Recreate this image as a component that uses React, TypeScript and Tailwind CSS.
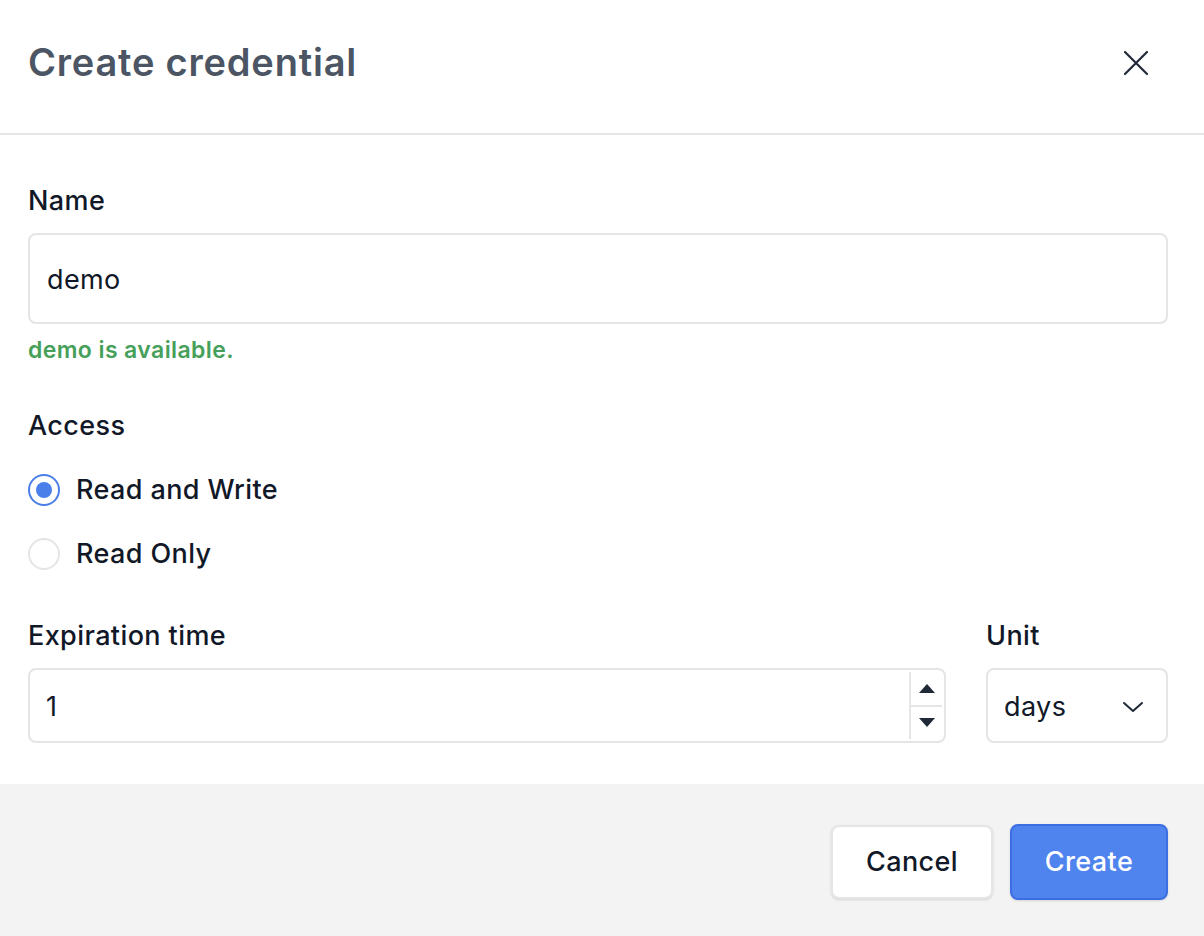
import { useState } from 'react';

const UNITS = ['days', 'hours', 'minutes'];

export default function App() {
  const [name, setName] = useState('demo');
  const [access, setAccess] = useState<'rw' | 'ro'>('rw');
  const [amount, setAmount] = useState(1);
  const [unit, setUnit] = useState(UNITS[0]);

  return (
    <div
      className="flex h-[936px] w-[1204px] flex-col bg-white text-[#111827]"
      style={{ fontFamily: 'Inter, "Noto Sans", sans-serif' }}
    >
      {/* ── Header ───────────────────────────────────────────── */}
      <div className="flex h-[135px] shrink-0 items-center justify-between border-b-2 border-[#e5e5e5] pb-[8px] pl-[28px] pr-[55px]">
        <h1 className="text-[38px] font-semibold tracking-[0.8px] text-[#4b5563]">Create credential</h1>
        <button type="button" aria-label="Close" className="text-[#1f2937]">
          <svg width="26" height="26" viewBox="0 0 26 26" fill="none" stroke="currentColor" strokeWidth="2.2" strokeLinecap="round">
            <path d="M2 2L24 24M24 2L2 24" />
          </svg>
        </button>
      </div>

      {/* ── Body ─────────────────────────────────────────────── */}
      <div className="flex flex-1 flex-col pl-[28px] pr-[36px] pt-[50px] text-[27px] tracking-[0.4px]">
        <label className="font-medium leading-[32px]">Name</label>
        <input
          value={name}
          onChange={(e) => setName(e.target.value)}
          className="mt-[16px] h-[91px] w-full rounded-[8px] border-2 border-[#e5e5e5] px-[17px] pt-[2px] outline-none"
        />
        <p className="mt-[12px] text-[23px] font-semibold leading-[28px] tracking-[0.4px] text-[#46a05a]">{name} is available.</p>

        <label className="mt-[46px] font-medium leading-[32px]">Access</label>
        <div className="mt-[32px] flex flex-col gap-[32px]">
          {([
            ['rw', 'Read and Write'],
            ['ro', 'Read Only'],
          ] as const).map(([id, text]) => {
            const on = access === id;
            return (
              <button key={id} type="button" onClick={() => setAccess(id)} className="flex h-[32px] items-center gap-[16px]">
                <span
                  className={
                    on
                      ? 'flex h-[32px] w-[32px] items-center justify-center rounded-full border-2 border-[#4a7fea]'
                      : 'flex h-[32px] w-[32px] items-center justify-center rounded-full border-2 border-[#e5e5e5]'
                  }
                >
                  {on && <span className="h-[16px] w-[16px] rounded-full bg-[#4a7fea]" />}
                </span>
                <span className="font-medium">{text}</span>
              </button>
            );
          })}
        </div>

        <div className="mt-[50px] flex gap-[40px]">
          <div className="flex flex-1 flex-col">
            <label className="font-medium leading-[32px]">Expiration time</label>
            <div className="mt-[16px] flex h-[75px] items-stretch rounded-[8px] border-2 border-[#e5e5e5]">
              <input
                value={amount}
                onChange={(e) => setAmount(Number(e.target.value) || 0)}
                className="min-w-0 flex-1 px-[16px] pt-[3px] outline-none"
              />
              <div className="my-[2px] mr-[2px] flex w-[33px] flex-col border-l-2 border-[#e5e5e5]">
                <button type="button" onClick={() => setAmount(amount + 1)} className="flex flex-1 items-center justify-center border-b-2 border-[#e5e5e5]">
                  <svg width="18" height="11" viewBox="0 0 18 11"><path d="M9 1L17 10H1Z" fill="#1f2937" /></svg>
                </button>
                <button type="button" onClick={() => setAmount(Math.max(0, amount - 1))} className="flex flex-1 items-center justify-center">
                  <svg width="18" height="11" viewBox="0 0 18 11"><path d="M9 10L17 1H1Z" fill="#1f2937" /></svg>
                </button>
              </div>
            </div>
          </div>
          <div className="flex w-[182px] flex-col">
            <label className="font-medium leading-[32px]">Unit</label>
            <button
              type="button"
              onClick={() => setUnit(UNITS[(UNITS.indexOf(unit) + 1) % UNITS.length])}
              className="mt-[16px] flex h-[75px] items-center justify-between rounded-[8px] border-2 border-[#e5e5e5] pl-[16px] pr-[22px] pt-[3px]"
            >
              {unit}
              <svg width="22" height="12" viewBox="0 0 22 12" fill="none" stroke="#1f2937" strokeWidth="2" strokeLinecap="round" strokeLinejoin="round">
                <path d="M2 2L11 10L20 2" />
              </svg>
            </button>
          </div>
        </div>
      </div>

      {/* ── Footer ───────────────────────────────────────────── */}
      <div className="flex h-[152px] shrink-0 items-center justify-end gap-[17px] bg-[#f3f3f3] px-[36px] pt-[3px] text-[27px] tracking-[0.4px]">
        <button
          type="button"
          className="h-[74px] w-[162px] rounded-[8px] border-2 border-[#e5e5e5] bg-white pt-[2px] font-medium shadow-sm"
        >
          Cancel
        </button>
        <button
          type="button"
          className="h-[76px] w-[158px] rounded-[8px] border-2 border-[#3b6ee3] bg-[#4f83ee] pt-[2px] font-medium text-white shadow-sm"
        >
          Create
        </button>
      </div>
    </div>
  );
}
